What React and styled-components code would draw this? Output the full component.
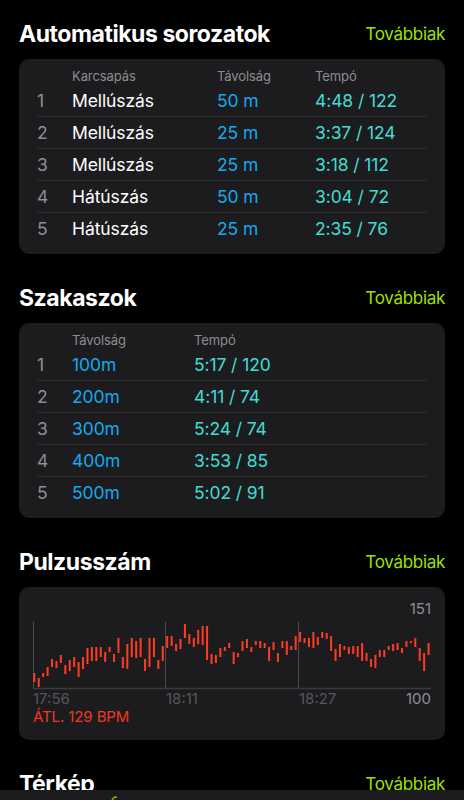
import React from "react";
import styled, { createGlobalStyle } from "styled-components";

const Global = createGlobalStyle`
  html, body { margin: 0; padding: 0; background: #000; }
  body { font-family: Inter, "Noto Sans", "Liberation Sans", sans-serif; color: #fff; -webkit-font-smoothing: antialiased; }
`;

const Page = styled.div`
  padding: 20px 19px 0 19px;
  display: flex;
  flex-direction: column;
  gap: 30px;
`;

const Section = styled.section`
  display: flex;
  flex-direction: column;
  gap: 11px;
`;

const SectionHeader = styled.div`
  display: flex;
  justify-content: space-between;
  align-items: center;
  height: 28px;
`;

const Title = styled.h2`
  margin: 0;
  font-size: 23px;
  font-weight: 700;
  letter-spacing: -0.45px;
  line-height: 28px;
`;

const More = styled.span`
  font-size: 17px;
  color: #9ee000;
  line-height: 28px;
  letter-spacing: -0.3px;
`;

const Card = styled.div`
  background: #1c1c1e;
  border-radius: 10px;
  padding: ${(p) => p.$pad || "8px 18px 10px 18px"};
`;

const Row = styled.div`
  display: grid;
  grid-template-columns: ${(p) => p.$cols};
  align-items: center;
  box-sizing: border-box;
  height: ${(p) => (p.$head ? "17px" : "32px")};
  & + & + & {
    border-top: 1px solid #2e2e31;
  }
`;

const HeadCell = styled.span`
  font-size: 13px;
  color: #8d8d92;
  letter-spacing: -0.1px;
`;

const Cell = styled.span`
  font-size: 17.5px;
  letter-spacing: -0.1px;
  color: ${(p) => p.$color || "#fff"};
`;

const colors = {
  num: "#8d8d92",
  dist: "#13aaf0",
  pace: "#3fdcd6",
};

const autoSets = [
  ["1", "Mellúszás", "50 m", "4:48 / 122"],
  ["2", "Mellúszás", "25 m", "3:37 / 124"],
  ["3", "Mellúszás", "25 m", "3:18 / 112"],
  ["4", "Hátúszás", "50 m", "3:04 / 72"],
  ["5", "Hátúszás", "25 m", "2:35 / 76"],
];

const splits = [
  ["1", "100m", "5:17 / 120"],
  ["2", "200m", "4:11 / 74"],
  ["3", "300m", "5:24 / 74"],
  ["4", "400m", "3:53 / 85"],
  ["5", "500m", "5:02 / 91"],
];

const bars = [
  [673, 682], [678, 687], [673, 677], [667, 676], [659, 667], [661, 668], [655, 663], [665, 674],
  [660, 671], [657, 667], [662, 677], [657, 669], [648, 664], [647, 661], [647, 661], [647, 657],
  [652, 662], [647, 652], [654, 662], [638, 653], [657, 668], [644, 669], [638, 657], [641, 658],
  [638, 657], [659, 671], [638, 667], [638, 657], [660, 669], [646, 661], [636, 648], [636, 646],
  [644, 651], [639, 649], [624, 638], [634, 644], [638, 647], [630, 644], [626, 645], [626, 660],
  [654, 664], [655, 663], [648, 657], [647, 651], [643, 648], [652, 664], [653, 657], [641, 651],
  [639, 648], [647, 652], [641, 645], [641, 648], [643, 648], [647, 661], [642, 650], [653, 662],
  [641, 648], [641, 655], [646, 650], [636, 650], [632, 642], [638, 643], [638, 647], [632, 648],
  [637, 645], [632, 638], [633, 639], [636, 651], [649, 661], [644, 657], [646, 650], [647, 654],
  [646, 654], [646, 657], [643, 661], [653, 661], [659, 667], [655, 668], [650, 657], [650, 657],
  [646, 650], [644, 651], [643, 650], [648, 653], [641, 647], [641, 643], [638, 647], [648, 661],
  [653, 671], [643, 655],
];

const ChartTop = styled.div`
  text-align: right;
  font-size: 15px;
  line-height: 18px;
  color: #8d8d92;
`;

const ChartSvg = styled.svg`
  display: block;
  width: 398px;
  height: 72px;
`;

const AxisLabels = styled.div`
  display: grid;
  grid-template-columns: 133px 133px 1fr;
  font-size: 15px;
  line-height: 18px;
  color: #56565a;
`;

const LastLabels = styled.div`
  display: flex;
  justify-content: space-between;
`;

const Max = styled.span`
  color: #8d8d92;
`;

const Avg = styled.div`
  font-size: 15px;
  line-height: 18px;
  color: #f2371f;
  letter-spacing: -0.1px;
`;

const BottomSheet = styled.div`
  position: fixed;
  left: 0;
  right: 0;
  bottom: 0;
  height: 10px;
  background: #1c1c1e;
`;

const MapTip = styled.svg`
  position: absolute;
  left: 111px;
  top: 6px;
`;

function HeartChart() {
  const x0 = 34.3;
  const step = 4.43;
  return (
    <ChartSvg viewBox="33 618 398 72">
      <line x1="33.5" y1="621.5" x2="33.5" y2="688" stroke="#4a4a4d" strokeWidth="1" />
      <line x1="165.5" y1="621.5" x2="165.5" y2="688" stroke="#4a4a4d" strokeWidth="1" />
      <line x1="298.5" y1="621.5" x2="298.5" y2="688" stroke="#4a4a4d" strokeWidth="1" />
      <line x1="33" y1="688.5" x2="431.5" y2="688.5" stroke="#3a3a3d" strokeWidth="1.5" />
      {bars.map(([a, b], i) => (
        <rect key={i} x={x0 + i * step - 1} y={a} width="2" height={b - a} fill="#ff3b22" />
      ))}
    </ChartSvg>
  );
}

export default function App() {
  return (
    <>
      <Global />
      <Page>
        <Section>
          <SectionHeader>
            <Title>Automatikus sorozatok</Title>
            <More>Továbbiak</More>
          </SectionHeader>
          <Card>
            <Row $head $cols="35px 145px 98px 1fr">
              <span />
              <HeadCell>Karcsapás</HeadCell>
              <HeadCell>Távolság</HeadCell>
              <HeadCell>Tempó</HeadCell>
            </Row>
            {autoSets.map(([n, s, d, p]) => (
              <Row key={n} $cols="35px 145px 98px 1fr">
                <Cell $color={colors.num}>{n}</Cell>
                <Cell>{s}</Cell>
                <Cell $color={colors.dist}>{d}</Cell>
                <Cell $color={colors.pace}>{p}</Cell>
              </Row>
            ))}
          </Card>
        </Section>

        <Section>
          <SectionHeader>
            <Title>Szakaszok</Title>
            <More>Továbbiak</More>
          </SectionHeader>
          <Card>
            <Row $head $cols="35px 122px 1fr">
              <span />
              <HeadCell>Távolság</HeadCell>
              <HeadCell>Tempó</HeadCell>
            </Row>
            {splits.map(([n, d, p]) => (
              <Row key={n} $cols="35px 122px 1fr">
                <Cell $color={colors.num}>{n}</Cell>
                <Cell $color={colors.dist}>{d}</Cell>
                <Cell $color={colors.pace}>{p}</Cell>
              </Row>
            ))}
          </Card>
        </Section>

        <Section>
          <SectionHeader>
            <Title>Pulzusszám</Title>
            <More>Továbbiak</More>
          </SectionHeader>
          <Card $pad="13px 14px 14px 14px">
            <ChartTop>151</ChartTop>
            <HeartChart />
            <AxisLabels>
              <span>17:56</span>
              <span>18:11</span>
              <LastLabels>
                <span>18:27</span>
                <Max>100</Max>
              </LastLabels>
            </AxisLabels>
            <Avg>ÁTL. 129 BPM</Avg>
          </Card>
        </Section>

        <Section>
          <SectionHeader>
            <Title>Térkép</Title>
            <More>Továbbiak</More>
          </SectionHeader>
        </Section>
      </Page>
      <BottomSheet>
        <MapTip width="7" height="4" viewBox="0 0 7 4">
          <path d="M1 4 L3 1.5 L6 1" stroke="#7fb800" strokeWidth="1.5" fill="none" />
        </MapTip>
      </BottomSheet>
    </>
  );
}
